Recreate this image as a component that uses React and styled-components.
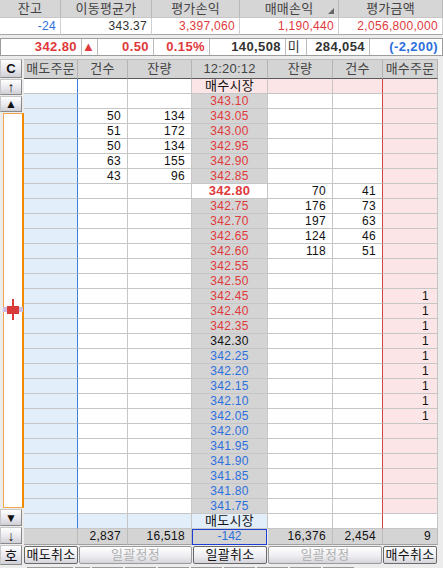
import React from 'react';
import styled, { createGlobalStyle, css } from 'styled-components';

const RED = '#e0393b';
const BLUE = '#2d6fdc';
const SELL_BG = '#e2eefa';
const BUY_BG = '#fbe5e6';
const GRAY = '#d4d4d4';

const GlobalStyle = createGlobalStyle`
  html, body { margin: 0; padding: 0; background: #ececec; }
  body {
    font-family: "Liberation Sans", "Noto Sans CJK KR", sans-serif;
    font-size: 12px;
    color: #111;
  }
  * { box-sizing: border-box; }
`;

const Screen = styled.div`
  width: 443px;
  height: 568px;
  overflow: hidden;
  background: #ececec;
`;

const TopGrid = styled.div`
  display: grid;
  grid-template-columns: 61px 91px 88px 99px 104px;
`;

const TopHead = styled.div`
  position: relative;
  height: 18px;
  line-height: 17px;
  background: #d6d6d6;
  border-right: 1px solid #b9b9b9;
  border-bottom: 1px solid #c6c6c6;
  color: #444;
  text-align: center;
  font-size: 13px;
  letter-spacing: 0.2px;
  ${(p) => p.$sort && css`
    &::after {
      content: '';
      position: absolute;
      right: 4px;
      bottom: 3px;
      border-style: solid;
      border-width: 0 0 6px 6px;
      border-color: transparent transparent #666 transparent;
    }
  `}
`;

const TopVal = styled.div`
  height: 17px;
  line-height: 16px;
  background: #fff;
  text-align: right;
  padding-right: 4px;
  border-right: 1px solid #d0d0d0;
  border-bottom: 1px solid #a8a8a8;
  color: ${(p) => p.$color || '#333'};
  letter-spacing: 0.3px;
`;

const PriceBar = styled.div`
  display: grid;
  grid-template-columns: 81px 16px 56px 56px 76px 21px 63px 72px;
  width: 443px;
  height: 18px;
  margin: 3px 0;
  background: #fff;
  border: 1px solid #9c9c9c;
`;

const PriceCell = styled.div`
  line-height: 16px;
  border-right: 1px solid #bdbdbd;
  padding-right: 4px;
  text-align: ${(p) => p.$align || 'right'};
  font-weight: ${(p) => (p.$light ? 400 : 700)};
  font-size: ${(p) => (p.$light ? '13px' : '13px')};
  color: ${(p) => p.$color || '#333'};
  letter-spacing: 0.4px;
  &:last-child { border-right: none; }
`;

const Main = styled.div`
  display: flex;
  align-items: stretch;
`;

const Strip = styled.div`
  width: 24px;
  display: flex;
  flex-direction: column;
  gap: 1px;
`;

const StripBtn = styled.div`
  width: 22px;
  height: ${(p) => p.$h}px;
  flex: none;
  border: 1px solid #8a8a8a;
  border-top-color: #c8c8c8;
  border-left-color: #c8c8c8;
  background: linear-gradient(#ffffff, #e8e8ee 55%, #cfcfd6);
  display: flex;
  align-items: center;
  justify-content: center;
  font-size: ${(p) => p.$fs || 12}px;
  font-weight: ${(p) => (p.$bold ? 700 : 400)};
  color: #111;
`;

const SliderBox = styled.div`
  position: relative;
  flex: 1;
  margin-left: 3px;
  background: #fff;
  border: 1px solid #f2a650;
  border-right: 2px solid #f08a00;
`;

const Marker = styled.svg`
  position: absolute;
  left: -1px;
  top: 185px;
`;

const Book = styled.div`
  display: grid;
  grid-template-columns: 54px 50px 64px 76px 65px 50px 55px;
  width: 414px;
`;

const HeadCell = styled.div`
  height: 20px;
  line-height: 18px;
  background: ${GRAY};
  border-top: 1px solid #bcbcbc;
  border-bottom: 1px solid #5a5a5a;
  border-right: 1px solid #b4b4b4;
  color: #444;
  text-align: center;
  font-size: 13px;
  letter-spacing: 0.2px;
`;

const Cell = styled.div`
  height: 15px;
  line-height: 14px;
  background: ${(p) => p.$bg || '#fff'};
  border-bottom: 1px solid #c6c6c6;
  border-right: 1px solid ${(p) => p.$line || '#c6c6c6'};
  color: ${(p) => p.$color || '#111'};
  text-align: ${(p) => p.$align || 'right'};
  padding-right: ${(p) => (p.$align === 'center' ? 0 : p.$pad || 6)}px;
  font-weight: ${(p) => (p.$bold ? 700 : 400)};
  font-size: ${(p) => (p.$bold || p.$kr ? '13px' : '12px')};
  letter-spacing: 0.3px;
`;

const SumCell = styled.div`
  height: 16px;
  line-height: 15px;
  background: ${GRAY};
  border-right: 1px solid #bcbcbc;
  border-bottom: 1px solid #a0a0a0;
  text-align: right;
  padding-right: 6px;
  color: #111;
  letter-spacing: 0.3px;
`;

const SumBox = styled.div`
  height: 16px;
  line-height: 13px;
  background: ${GRAY};
  border: 1px solid #1f3fd4;
  color: ${BLUE};
  text-align: center;
  margin-right: 1px;
`;

const BtnRow = styled.div`
  grid-column: 1 / -1;
  display: grid;
  grid-template-columns: 55px 114px 75px 115px 55px;
  height: 20px;
  padding-top: 1px;
`;

const ActBtn = styled.div`
  height: 18px;
  margin-right: 1px;
  border: 1px solid ${(p) => (p.$off ? '#9a9a9a' : '#6a6a6a')};
  border-radius: 2px;
  background: linear-gradient(#ffffff, #eeeef2 55%, #d4d4da);
  color: ${(p) => (p.$off ? '#b0b0b0' : '#111')};
  text-align: center;
  line-height: 16px;
  font-size: 13px;
  letter-spacing: 0.3px;
`;

const Tabs = styled.div`
  display: flex;
  gap: 2px;
  margin: 2px 0 0 27px;
`;

const Tab = styled.div`
  width: ${(p) => p.$w}px;
  height: 12px;
  border: 1px solid #9a9a9a;
  border-bottom: none;
  background: ${(p) => (p.$active ? '#fff' : '#e4e4e4')};
`;

const topHeads = ['잔고', '이동평균가', '평가손익', '매매손익', '평가금액'];
const topVals = [
  { v: '-24', c: BLUE },
  { v: '343.37', c: '#333' },
  { v: '3,397,060', c: RED },
  { v: '1,190,440', c: RED },
  { v: '2,056,800,000', c: RED },
];

const sellQty = {
  34305: [50, 134],
  34300: [51, 172],
  34295: [50, 134],
  34290: [63, 155],
  34285: [43, 96],
};
const buyQty = {
  34280: [70, 41],
  34275: [176, 73],
  34270: [197, 63],
  34265: [124, 46],
  34260: [118, 51],
};

const BASE = 34230;
const CUR = 34280;

const prices = [];
for (let p = 34310; p >= 34175; p -= 5) prices.push(p);

const fmt = (p) => (p / 100).toFixed(2);

function BookRows() {
  const rows = [];
  rows.push(
    <React.Fragment key="buy-market">
      <Cell $line="#3d7fe0" />
      <Cell />
      <Cell />
      <Cell $bg={BUY_BG} $align="center" $kr>매수시장</Cell>
      <Cell $bg={BUY_BG} />
      <Cell $bg={BUY_BG} $line="#d04444" />
      <Cell $bg={BUY_BG} />
    </React.Fragment>
  );
  prices.forEach((p) => {
    const s = sellQty[p];
    const b = buyQty[p];
    const color = p > BASE ? RED : p < BASE ? BLUE : '#111';
    const isCur = p === CUR;
    const order = p <= 34245 && p >= 34205 ? 1 : '';
    rows.push(
      <React.Fragment key={p}>
        <Cell $bg={SELL_BG} $line="#3d7fe0" />
        <Cell>{s ? s[0] : ''}</Cell>
        <Cell>{s ? s[1] : ''}</Cell>
        <Cell $bg={isCur ? '#fff' : GRAY} $align="center" $color={color} $bold={isCur}>
          {fmt(p)}
        </Cell>
        <Cell>{b ? b[0] : ''}</Cell>
        <Cell $line="#d04444">{b ? b[1] : ''}</Cell>
        <Cell $bg={BUY_BG} $pad={8}>{order}</Cell>
      </React.Fragment>
    );
  });
  rows.push(
    <React.Fragment key="sell-market">
      <Cell $bg={SELL_BG} $line="#3d7fe0" />
      <Cell $bg={SELL_BG} />
      <Cell $bg={SELL_BG} />
      <Cell $bg={SELL_BG} $align="center" $kr>매도시장</Cell>
      <Cell />
      <Cell $line="#d04444" />
      <Cell />
    </React.Fragment>
  );
  return rows;
}

export default function App() {
  return (
    <Screen>
      <GlobalStyle />
      <TopGrid>
        {topHeads.map((h, i) => (
          <TopHead key={h} $sort={i === 3}>{h}</TopHead>
        ))}
        {topVals.map((t) => (
          <TopVal key={t.v} $color={t.c}>{t.v}</TopVal>
        ))}
      </TopGrid>

      <PriceBar>
        <PriceCell $color={RED}>342.80</PriceCell>
        <PriceCell $color={RED} $align="center" $light>▲</PriceCell>
        <PriceCell $color={RED}>0.50</PriceCell>
        <PriceCell $color={RED}>0.15%</PriceCell>
        <PriceCell>140,508</PriceCell>
        <PriceCell $align="center" $light>미</PriceCell>
        <PriceCell>284,054</PriceCell>
        <PriceCell $color={BLUE}>(-2,200)</PriceCell>
      </PriceBar>

      <Main>
        <Strip>
          <StripBtn $h={19} $bold $fs={13}>C</StripBtn>
          <StripBtn $h={16} $fs={14}>↑</StripBtn>
          <StripBtn $h={16} $fs={12}>▲</StripBtn>
          <SliderBox>
            <Marker width="20" height="21" viewBox="0 0 20 21">
              <rect x="0" y="8" width="20" height="5" fill="#cdbfe3" />
              <rect x="4" y="7" width="12" height="8" fill="#d93a3a" />
              <rect x="9" y="0" width="2" height="21" fill="#d93a3a" />
            </Marker>
          </SliderBox>
          <StripBtn $h={17} $fs={12}>▼</StripBtn>
          <StripBtn $h={17} $fs={14}>↓</StripBtn>
          <StripBtn $h={20} $fs={14}>호</StripBtn>
        </Strip>

        <Book>
          <HeadCell>매도주문</HeadCell>
          <HeadCell>건수</HeadCell>
          <HeadCell>잔량</HeadCell>
          <HeadCell>12:20:12</HeadCell>
          <HeadCell>잔량</HeadCell>
          <HeadCell>건수</HeadCell>
          <HeadCell>매수주문</HeadCell>

          <BookRows />

          <SumCell />
          <SumCell>2,837</SumCell>
          <SumCell>16,518</SumCell>
          <SumBox>-142</SumBox>
          <SumCell>16,376</SumCell>
          <SumCell>2,454</SumCell>
          <SumCell>9</SumCell>

          <BtnRow>
            <ActBtn>매도취소</ActBtn>
            <ActBtn $off>일괄정정</ActBtn>
            <ActBtn>일괄취소</ActBtn>
            <ActBtn $off>일괄정정</ActBtn>
            <ActBtn>매수취소</ActBtn>
          </BtnRow>
        </Book>
      </Main>

      <Tabs>
        <Tab $w={46} $active />
        <Tab $w={15} />
        <Tab $w={31} />
        <Tab $w={31} />
        <Tab $w={31} />
        <Tab $w={31} />
        <Tab $w={31} />
        <Tab $w={31} />
        <Tab $w={31} />
        <Tab $w={31} />
      </Tabs>
    </Screen>
  );
}
